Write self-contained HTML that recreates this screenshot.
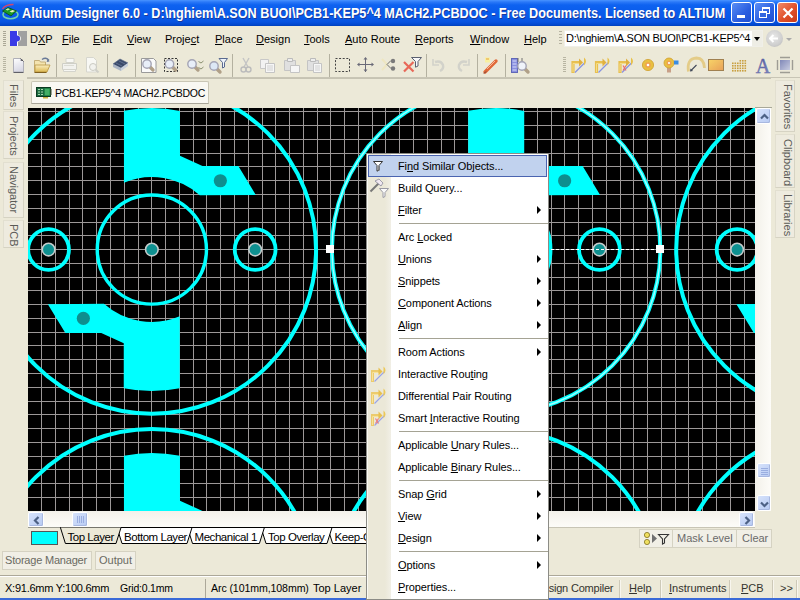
<!DOCTYPE html>
<html><head><meta charset="utf-8">
<style>
*{margin:0;padding:0;box-sizing:border-box}
html,body{width:800px;height:600px;overflow:hidden;background:#ece9d8;font-family:"Liberation Sans",sans-serif;font-size:11px;color:#000}
.a{position:absolute}
.t{position:absolute;white-space:nowrap;line-height:13px}
u{text-decoration:underline;text-underline-offset:1px;text-decoration-thickness:1px}
#title{left:0;top:0;width:800px;height:26px;background:linear-gradient(#4a94ff 0px,#2a78f8 2px,#0e62f0 5px,#0a5cec 12px,#0858e8 18px,#0652e0 22px,#0046cc 25px,#0040b8 26px)}
#title .tt{position:absolute;left:22px;top:5px;line-height:16px;color:#fff;font-weight:bold;font-size:14px;transform-origin:0 0;transform:scaleX(0.9035);text-shadow:1px 1px 0 #1a3a9a;white-space:nowrap}
.wb{position:absolute;top:2px;width:21px;height:21px;border:1px solid #fff;border-radius:3px;background:linear-gradient(135deg,#5a8ef5,#2a5ee0 60%,#1f4fd0)}
#menubar{left:0;top:26px;width:800px;height:26px;background:#ece9d8}
.mi{position:absolute;top:33px;white-space:nowrap;line-height:13px}
#toolbar{left:0;top:52px;width:800px;height:28px;background:#ece9d8}
.grip{position:absolute;width:3px;background:repeating-linear-gradient(#b5b2a0 0 1px,transparent 1px 3px)}
.sep{position:absolute;width:1px;background:#c5c2b2;border-right:1px solid #fff}
.vtab{position:absolute;border:1px solid #c9c6b5;background:#f3f1e8;border-radius:2px}
.vtab span{position:absolute;white-space:nowrap;transform-origin:0 0;transform:rotate(90deg);color:#555;font-size:11px;line-height:13px}
.menu{left:366px;top:153px;width:183px;height:447px;background:#fff;border:1px solid #8c8c86}
.gut{position:absolute;left:0;top:0;width:24px;height:100%;background:linear-gradient(90deg,#fafaf4 0,#fafaf4 1px,#ebe8d8 1px,#ebe8d8 18px,#f1efe6 24px)}
.msep{position:absolute;left:32px;width:149px;height:1px;background:#a5a394}
.arr{position:absolute;left:170px;width:0;height:0;border-top:4px solid transparent;border-bottom:4px solid transparent;border-left:4px solid #000}
.btn{position:absolute;border:1px solid #d5d2c2;background:#f1efe6}
</style></head><body>
<div id="title" class="a">
  <svg class="a" style="left:0;top:0" width="22" height="24" viewBox="0 0 22 24">
    <path d="M2.5 9 Q5 4.5 13.5 4.5" stroke="#d04870" stroke-width="1.5" fill="none"/>
    <ellipse cx="10.5" cy="14.5" rx="7.5" ry="4.2" fill="none" stroke="#70d0b0" stroke-width="1.6"/>
    <path d="M2.5 11 L8 7.5 L16.5 11 L11 16 Z" fill="#1c9a28" stroke="#0a4a10" stroke-width="0.8"/>
    <path d="M5.5 9.5l2.5-1.2 2 1-2.5 1.2z" fill="#c8f0b0"/>
    <path d="M9.5 11.5l3-1.4 2.5 1-3 1.5z" fill="#f0f0c0"/>
  </svg>
  <div class="tt">Altium Designer 6.0 - D:\nghiem\A.SON BUOI\PCB1-KEP5^4 MACH2.PCBDOC - Free Documents. Licensed to ALTIUM</div>
  <div class="wb" style="left:731px"><div class="a" style="left:5px;top:12px;width:8px;height:3px;background:#fff"></div></div>
  <div class="wb" style="left:754px"><div class="a" style="left:7px;top:4px;width:8px;height:7px;border:1px solid #fff;border-top-width:2px"></div><div class="a" style="left:4px;top:8px;width:8px;height:7px;border:1px solid #fff;border-top-width:2px;background:#3366e0"></div></div>
  <div class="wb" style="left:777px;width:21px;background:linear-gradient(135deg,#f08a6a,#e0502a 55%,#c83a18)"><svg class="a" style="left:4px;top:4px" width="12" height="12"><path d="M1.5 1.5L10.5 10.5M10.5 1.5L1.5 10.5" stroke="#fff" stroke-width="2.2"/></svg></div>
</div>

<div id="menubar" class="a">
  <svg class="a" style="left:0;top:0" width="30" height="26" viewBox="0 26 30 26">
    <path d="M3 31.5h3M3 33.5h3M3 35.5h3M3 37.5h3M3 39.5h3M3 41.5h3M3 43.5h3M3 45.5h3" stroke="#aaa796"/>
    <rect x="10" y="31" width="7" height="15" fill="#3a3ae6"/>
    <rect x="18" y="31" width="9" height="15" fill="#a0a0a0"/>
    <path d="M17.5 31V35.5A3 3 0 0 1 17.5 41.5V46" stroke="#fff" stroke-width="1" fill="none"/>
    <path d="M17 35.5A3 3 0 0 1 17 41.5Z" fill="#3a3ae6"/>
  </svg>
</div>
<div class="mi" style="left:30px">D<u>X</u>P</div>
<div class="mi" style="left:62px"><u>F</u>ile</div>
<div class="mi" style="left:93px"><u>E</u>dit</div>
<div class="mi" style="left:127px"><u>V</u>iew</div>
<div class="mi" style="left:165px">Proje<u>c</u>t</div>
<div class="mi" style="left:215px"><u>P</u>lace</div>
<div class="mi" style="left:256px"><u>D</u>esign</div>
<div class="mi" style="left:304px"><u>T</u>ools</div>
<div class="mi" style="left:345px"><u>A</u>uto Route</div>
<div class="mi" style="left:415px"><u>R</u>eports</div>
<div class="mi" style="left:470px"><u>W</u>indow</div>
<div class="mi" style="left:524px"><u>H</u>elp</div>
<div class="grip" style="left:559px;top:31px;height:15px"></div>
<div class="a" style="left:564px;top:30px;width:199px;height:17px;background:#fff;border:1px solid #f0efe8"></div>
<div class="t" style="left:566px;top:32px;letter-spacing:-0.25px">D:\nghiem\A.SON BUOI\PCB1-KEP5^4</div>
<div class="a" style="left:752px;top:31px;width:10px;height:15px;background:#eeede5"></div>
<div class="a" style="left:754px;top:37px;width:0;height:0;border-left:3px solid transparent;border-right:3px solid transparent;border-top:4px solid #000"></div>
<div class="a" style="left:766px;top:30px;width:17px;height:17px;border-radius:50%;background:radial-gradient(circle at 45% 40%,#e8e8e8,#cfcfcf 60%,#b0b0b0)"></div><svg class="a" style="left:769px;top:34px" width="11" height="9"><path d="M1 4.5h8M4.5 1l-3.5 3.5 3.5 3.5" stroke="#fff" stroke-width="2" fill="none"/></svg>
<div class="a" style="left:786px;top:38px;width:0;height:0;border-left:3px solid transparent;border-right:3px solid transparent;border-top:3px solid #aaa"></div>

<div id="toolbar" class="a">
  <div class="a" style="left:27px;top:25px;width:773px;height:1px;background:#c8c5b5"></div>
</div>
<svg class="a" style="left:0;top:52px" width="800" height="28" viewBox="0 52 800 28">
<path d="M3 57.5h3M3 59.5h3M3 61.5h3M3 63.5h3M3 65.5h3M3 67.5h3M3 69.5h3M3 71.5h3" stroke="#b8b5a2" stroke-width="1"/>
<path d="M563 57.5h3M563 59.5h3M563 61.5h3M563 63.5h3M563 65.5h3M563 67.5h3M563 69.5h3M563 71.5h3" stroke="#b8b5a2" stroke-width="1"/>
<path d="M56.5 54V77" stroke="#b4b1a0"/>
<path d="M107.5 54V77" stroke="#b4b1a0"/>
<path d="M135.5 54V77" stroke="#b4b1a0"/>
<path d="M232.5 54V77" stroke="#b4b1a0"/>
<path d="M329.5 54V77" stroke="#b4b1a0"/>
<path d="M426.5 54V77" stroke="#b4b1a0"/>
<path d="M477.5 54V77" stroke="#b4b1a0"/>
<path d="M505.5 54V77" stroke="#b4b1a0"/>
<defs><linearGradient id="pg" x1="0" y1="0" x2="0.3" y2="1"><stop offset="0" stop-color="#fff"/><stop offset="1" stop-color="#d8d8e4"/></linearGradient><linearGradient id="fg" x1="0" y1="0" x2="0" y2="1"><stop offset="0" stop-color="#fbeec0"/><stop offset="1" stop-color="#dcb850"/></linearGradient></defs><path d="M13.5 58.5h7l3 3v10.5h-10z" fill="url(#pg)" stroke="#b0b0b8"/><path d="M13.5 72.5h10" stroke="#606068"/><path d="M20.5 58.5l3 3" stroke="#505058"/><circle cx="21.5" cy="60" r="1" fill="#606068"/>
<path d="M34.5 60.5h5l1 1.5h5v10h-11z" fill="#f4e4b0" stroke="#c0a870" stroke-width="0.9"/><path d="M35 65h15l-3 7h-12z" fill="url(#fg)" stroke="#b89440" stroke-width="0.8"/><path d="M34.5 72.5h12" stroke="#806020"/><path d="M42 59.5q4-3 7 1" stroke="#6a7a98" stroke-width="1.3" fill="none"/><path d="M47.5 59l2 2.5-2.8 0.6z" fill="#6a7a98"/>
<path d="M66 58.5h8v4h-8z" fill="#f8f8f4" stroke="#d4d4cc"/><path d="M62.5 63.5h14v6h-14z" fill="#f2f2ee" stroke="#cfcfc6"/><path d="M63.5 69.5h12v2h-12z" fill="#f6f6f2" stroke="#d4d4cc"/><path d="M64 65.5h10" stroke="#dcdcd4"/>
<path d="M86.5 57.5h7l3 3v11.5h-10z" fill="#f8f8f4" stroke="#d6d6ce"/><circle cx="93" cy="67" r="3.5" fill="#f2f2ee" stroke="#cacac2"/><path d="M95.5 69.5l3 3" stroke="#cfcfc8" stroke-width="2"/>
<path d="M113 64l7-5 8 4-7 5z" fill="#3a4a6a" stroke="#5a6a8a" stroke-width="0.6"/><path d="M113 64v3l8 4v-3z" fill="#aab4c4"/><path d="M121 68v3l7-5v-3z" fill="#c8d0dc"/><path d="M116 63l6 3M119 61l6 3" stroke="#7a8aaa" stroke-width="0.6"/>
<path d="M141.5 58.5h12l2.5 2.5v11.5h-14.5z" fill="#fafafa" stroke="#9a9a9a"/><path d="M150.0 67.0L153.0 70.0" stroke="#b0a088" stroke-width="3.4" stroke-linecap="round"/><circle cx="147" cy="64" r="4.2" fill="#e8eef8" stroke="#a4a4b4" stroke-width="1.4"/>
<rect x="164.5" y="58.5" width="13" height="13" fill="none" stroke="#333" stroke-dasharray="2 1.5"/><path d="M172.5 67.0L175.5 70.0" stroke="#b0a088" stroke-width="3.4" stroke-linecap="round"/><circle cx="169.5" cy="64" r="4.2" fill="#e8eef8" stroke="#a4a4b4" stroke-width="1.4"/>
<path d="M195.0 67.0L198.0 70.0" stroke="#b0a088" stroke-width="3.4" stroke-linecap="round"/><circle cx="192" cy="64" r="4.2" fill="#e8eef8" stroke="#a4a4b4" stroke-width="1.4"/><path d="M198.5 61.5l2.5 1.5 2.5-2M198.5 67.5l2.5 1.5 2.5-2" stroke="#8a9070" stroke-width="1" fill="none"/>
<path d="M217.0 69.0L220.0 72.0" stroke="#b0a088" stroke-width="3.4" stroke-linecap="round"/><circle cx="214" cy="66" r="4.2" fill="#dde8f5" stroke="#a4a4b4" stroke-width="1.4"/><path d="M219 58.5h8.5l-3 4v4.5l-2 1v-5.5z" fill="#eef3fa" stroke="#5a6a90" stroke-width="1"/>
<path d="M243 58l5 9M249 58l-5 9" stroke="#c4c4c4" stroke-width="1.4"/><circle cx="243.5" cy="69.5" r="2.5" fill="none" stroke="#bcbcbc" stroke-width="1.4"/><circle cx="248.5" cy="69.5" r="2.5" fill="none" stroke="#bcbcbc" stroke-width="1.4"/>
<path d="M260.5 59.5h8v9h-8z" fill="#f2f2f2" stroke="#c8c8c8"/><path d="M265.5 63.5h9v9h-9z" fill="#f6f6f6" stroke="#c4c4c4"/><path d="M267 66h6M267 68h6M267 70h6" stroke="#d0d0d0"/>
<path d="M284.5 60.5h11v10h-11z" fill="#e0e0e0" stroke="#c4c4c4"/><path d="M287.5 58.5h5v3h-5z" fill="#eee" stroke="#bbb"/><path d="M290.5 65.5h9v7h-9z" fill="#f6f6f6" stroke="#c4c4c4"/>
<path d="M307.5 60.5h11v10h-11z" fill="#e0e0e0" stroke="#c4c4c4"/><path d="M310.5 58.5h5v3h-5z" fill="#eee" stroke="#bbb"/><path d="M313.5 63.5h8v9h-8z" fill="#f6f6f6" stroke="#c4c4c4"/><path d="M315 66h5M315 68h5M315 70h5" stroke="#d0d0d0"/>
<rect x="335.5" y="58.5" width="14" height="13" fill="none" stroke="#444" stroke-dasharray="2 1.6"/>
<path d="M365.5 58v14M358.5 64.5h14" stroke="#6a6a78" stroke-width="1"/><path d="M363.5 59.5h4l-2-2.5zM363.5 69.5h4l-2 2.5zM359.5 62.5v4l-2.5-2zM371.5 62.5v4l2.5-2z" fill="#6a6a78"/>
<path d="M382 59l5 5.5-5 5.5" stroke="#eee6c0" stroke-width="2" fill="none"/><path d="M387 64.5l4-4M387 64.5l4 4" stroke="#707070" stroke-width="1"/><circle cx="393" cy="61" r="2.2" fill="#7a7a7a"/><circle cx="393" cy="68.5" r="2.2" fill="#7a7a7a"/>
<path d="M404 62l9.5 9.5M413.5 62l-9.5 9.5" stroke="#e86858" stroke-width="2.2"/><path d="M411.5 57.5h10l-3.5 4v4.5l-2.5 1.2v-5.7z" fill="#f8f8fa" stroke="#5a6070" stroke-width="1"/>
<path d="M435 62q6-2 8 3q1 4-3 6" stroke="#d2d2ca" stroke-width="2.4" fill="none"/><path d="M433 59v6h6" stroke="#d2d2ca" stroke-width="1.6" fill="none"/>
<path d="M467 62q-6-2-8 3q-1 4 3 6" stroke="#d2d2ca" stroke-width="2.4" fill="none"/><path d="M469 59v6h-6" stroke="#d2d2ca" stroke-width="1.6" fill="none"/>
<rect x="485" y="57.5" width="5" height="5" fill="#f8f0a0"/><path d="M486 59h3" stroke="#e8a040"/><path d="M485 72l11-11" stroke="#e06838" stroke-width="3.4" stroke-linecap="round"/><path d="M487 69l8-8" stroke="#f8b898" stroke-width="1"/><path d="M484 73.5l2-2" stroke="#604040" stroke-width="1"/>
<rect x="511.5" y="58.5" width="6" height="14" fill="#8a90e0" stroke="#6068b8"/><path d="M512.5 61h4M512.5 64h4M512.5 67h4M512.5 70h4" stroke="#d8dcf8"/><path d="M518 58v4M522 58v4" stroke="#707070"/><path d="M525.0 69.0L528.0 72.0" stroke="#b0a088" stroke-width="3.4" stroke-linecap="round"/><circle cx="522" cy="66" r="4.2" fill="#f0f4fa" stroke="#a4a4b4" stroke-width="1.4"/>
<path d="M573 73V62.5h7" stroke="#e8c050" stroke-width="3.2" fill="none"/><path d="M573 72V63.5h6" stroke="#f4dc88" stroke-width="1" fill="none"/><path d="M579 58.5l4 4-4 4z" fill="#e0b040"/><path d="M575 72.5l10-10" stroke="#8894e0" stroke-width="1.2"/><path d="M584 57.5q4 3.5 0 8z" fill="#e8c048"/>
<path d="M596.5 73V62.5h7" stroke="#e8c050" stroke-width="3.2" fill="none"/><path d="M596.5 72V63.5h6" stroke="#f4dc88" stroke-width="1" fill="none"/><path d="M602.5 58.5l4 4-4 4z" fill="#e0b040"/><path d="M598.5 72.5l10-10" stroke="#8894e0" stroke-width="1.2"/><path d="M607.5 57.5q4 3.5 0 8z" fill="#e8c048"/>
<path d="M620 73V62.5h7" stroke="#e8c050" stroke-width="3.2" fill="none"/><path d="M620 72V63.5h6" stroke="#f4dc88" stroke-width="1" fill="none"/><path d="M626 58.5l4 4-4 4z" fill="#e0b040"/><path d="M622 72.5l10-10" stroke="#8894e0" stroke-width="1.2"/><path d="M631 57.5q4 3.5 0 8z" fill="#e8c048"/><path d="M623 65.5l3 5M626 65.5l-3 5" stroke="#e87070" stroke-width="1.2"/>
<circle cx="648" cy="65" r="5.6" fill="#e8c040" stroke="#d0a030" stroke-width="0.8"/><circle cx="648" cy="65" r="2.8" fill="#f0a050"/><circle cx="648" cy="65" r="1.3" fill="#fff"/>
<path d="M667 67h4v5.5h-4z" fill="#c8a088"/><circle cx="669" cy="63" r="5" fill="#e8c040" stroke="#d0a030" stroke-width="0.8"/><circle cx="669" cy="63" r="2.5" fill="#f0a050"/><circle cx="669" cy="63" r="1.1" fill="#fff"/><rect x="674" y="60.5" width="4.5" height="4" fill="#3a8ce0"/>
<path d="M688.5 71.5q-2-13 8-13.5q7.5 0 8 10" stroke="#e4cc88" stroke-width="2.8" fill="none"/><path d="M691 70.5l5.5-5.5" stroke="#404858" stroke-width="1.1"/><path d="M690 71.5l0.5-3 2.5 2.5z" fill="#404858"/>
<defs><linearGradient id="rg" x1="0" y1="0" x2="1" y2="1"><stop offset="0" stop-color="#f8d468"/><stop offset="1" stop-color="#e8a058"/></linearGradient></defs><rect x="708.5" y="59.5" width="15" height="11" fill="url(#rg)" stroke="#a08050"/>
<rect x="739.5" y="60" width="1.6" height="1.6" fill="#c8a040"/><rect x="742" y="60" width="1.6" height="1.6" fill="#c8a040"/><rect x="744.5" y="60" width="1.6" height="1.6" fill="#c8a040"/><rect x="732" y="62.5" width="1.6" height="1.6" fill="#c8a040"/><rect x="734.5" y="62.5" width="1.6" height="1.6" fill="#c8a040"/><rect x="737" y="62.5" width="1.6" height="1.6" fill="#c8a040"/><rect x="739.5" y="62.5" width="1.6" height="1.6" fill="#c8a040"/><rect x="742" y="62.5" width="1.6" height="1.6" fill="#c8a040"/><rect x="744.5" y="62.5" width="1.6" height="1.6" fill="#c8a040"/><rect x="732" y="65" width="1.6" height="1.6" fill="#c8a040"/><rect x="734.5" y="65" width="1.6" height="1.6" fill="#c8a040"/><rect x="737" y="65" width="1.6" height="1.6" fill="#c8a040"/><rect x="739.5" y="65" width="1.6" height="1.6" fill="#c8a040"/><rect x="742" y="65" width="1.6" height="1.6" fill="#c8a040"/><rect x="744.5" y="65" width="1.6" height="1.6" fill="#c8a040"/><rect x="732" y="67.5" width="1.6" height="1.6" fill="#c8a040"/><rect x="734.5" y="67.5" width="1.6" height="1.6" fill="#c8a040"/><rect x="737" y="67.5" width="1.6" height="1.6" fill="#c8a040"/><rect x="739.5" y="67.5" width="1.6" height="1.6" fill="#c8a040"/><rect x="742" y="67.5" width="1.6" height="1.6" fill="#c8a040"/><rect x="744.5" y="67.5" width="1.6" height="1.6" fill="#c8a040"/><rect x="732" y="70" width="1.6" height="1.6" fill="#c8a040"/><rect x="734.5" y="70" width="1.6" height="1.6" fill="#c8a040"/><rect x="737" y="70" width="1.6" height="1.6" fill="#c8a040"/><rect x="739.5" y="70" width="1.6" height="1.6" fill="#c8a040"/><rect x="742" y="70" width="1.6" height="1.6" fill="#c8a040"/><rect x="744.5" y="70" width="1.6" height="1.6" fill="#c8a040"/>
<defs><linearGradient id="ag" x1="0" y1="0" x2="0" y2="1"><stop offset="0" stop-color="#5058a0"/><stop offset="1" stop-color="#8890c8"/></linearGradient></defs><text x="763" y="73" font-family="Liberation Serif" font-size="20" fill="url(#ag)" stroke="#5a62a0" stroke-width="0.4" text-anchor="middle">A</text>
<defs><linearGradient id="cg" x1="0" y1="0" x2="1" y2="1"><stop offset="0" stop-color="#8088b8"/><stop offset="1" stop-color="#c8cce0"/></linearGradient></defs><rect x="780" y="60" width="10" height="10" fill="url(#cg)"/><path d="M780.5 57.5h10M780.5 72.5h10M777.5 60.5v10M792.5 60.5v10" stroke="#505050" stroke-width="1.4" stroke-dasharray="1 1"/>
<path d="M27 78.5H771" stroke="#c6c3b3"/>
</svg>

<!-- tabs -->
<div class="a" style="left:3px;top:80px;width:21px;height:30px;border:1px solid #e2dfd0;border-right-color:#d6d3c3;border-bottom-color:#d6d3c3;background:#eeebdf"></div>
<div class="t" style="left:20px;top:84px;transform-origin:0 0;transform:rotate(90deg);color:#5a5a56">Files</div>
<div class="a" style="left:3px;top:111px;width:21px;height:48px;border:1px solid #e2dfd0;border-right-color:#d6d3c3;border-bottom-color:#d6d3c3;background:#eeebdf"></div>
<div class="t" style="left:20px;top:116px;transform-origin:0 0;transform:rotate(90deg);color:#5a5a56">Projects</div>
<div class="a" style="left:3px;top:162px;width:21px;height:56px;border:1px solid #e2dfd0;border-right-color:#d6d3c3;border-bottom-color:#d6d3c3;background:#eeebdf"></div>
<div class="t" style="left:20px;top:166px;transform-origin:0 0;transform:rotate(90deg);color:#5a5a56">Navigator</div>
<div class="a" style="left:3px;top:220px;width:21px;height:28px;border:1px solid #e2dfd0;border-right-color:#d6d3c3;border-bottom-color:#d6d3c3;background:#eeebdf"></div>
<div class="t" style="left:20px;top:224px;transform-origin:0 0;transform:rotate(90deg);color:#5a5a56">PCB</div>
<div class="a" style="left:775px;top:80px;width:20px;height:52px;border:1px solid #e2dfd0;border-right-color:#d6d3c3;border-bottom-color:#d6d3c3;background:#eeebdf"></div>
<div class="t" style="left:793.5px;top:83.5px;transform-origin:0 0;transform:rotate(90deg);color:#5a5a56">Favorites</div>
<div class="a" style="left:775px;top:134px;width:20px;height:54px;border:1px solid #e2dfd0;border-right-color:#d6d3c3;border-bottom-color:#d6d3c3;background:#eeebdf"></div>
<div class="t" style="left:793.5px;top:139px;transform-origin:0 0;transform:rotate(90deg);color:#5a5a56">Clipboard</div>
<div class="a" style="left:775px;top:190px;width:20px;height:48px;border:1px solid #e2dfd0;border-right-color:#d6d3c3;border-bottom-color:#d6d3c3;background:#eeebdf"></div>
<div class="t" style="left:793.5px;top:194px;transform-origin:0 0;transform:rotate(90deg);color:#5a5a56">Libraries</div>
<!-- doc tab -->
<div class="a" style="left:31px;top:81px;width:178px;height:23px;background:#f9f8f2;border:1px solid #c9c6b5;border-bottom-color:#a8a598;border-radius:2px 2px 0 0"></div>
<svg class="a" style="left:36px;top:87px" width="16" height="13" viewBox="0 0 16 13"><rect x="0.5" y="0.5" width="14" height="9" fill="#1a6a40" stroke="#0a3a20"/><path d="M2 2.5h2M2 5h2M2 7.5h2M5 2.5h2M5 5h2M5 7.5h2" stroke="#a8d8b0" stroke-width="1.2"/><rect x="8.5" y="1.5" width="5.5" height="7" fill="#2aa050"/><path d="M9 3h4M9 5h4M9 7h4" stroke="#70c890" stroke-width="0.7"/><rect x="7" y="10" width="5" height="1.5" fill="#c8b040"/><rect x="14" y="2" width="1.5" height="6" fill="#304830"/></svg>
<div class="t" style="left:55px;top:87px;font-size:10.5px;letter-spacing:-0.25px">PCB1-KEP5^4 MACH2.PCBDOC</div>

<svg width="727" height="403" viewBox="28 108 727 403" style="position:absolute;left:28px;top:108px;display:block" shape-rendering="crispEdges">
<rect x="28" y="108" width="727" height="403" fill="#000"/>
<path d="M41.5 108V511M55.5 108V511M69.5 108V511M82.5 108V511M96.5 108V511M110.5 108V511M124.5 108V511M138.5 108V511M151.5 108V511M165.5 108V511M179.5 108V511M193.5 108V511M206.5 108V511M220.5 108V511M234.5 108V511M248.5 108V511M262.5 108V511M275.5 108V511M289.5 108V511M303.5 108V511M317.5 108V511M330.5 108V511M344.5 108V511M358.5 108V511M372.5 108V511M385.5 108V511M399.5 108V511M413.5 108V511M427.5 108V511M441.5 108V511M454.5 108V511M468.5 108V511M482.5 108V511M496.5 108V511M509.5 108V511M523.5 108V511M537.5 108V511M551.5 108V511M564.5 108V511M578.5 108V511M592.5 108V511M606.5 108V511M620.5 108V511M633.5 108V511M647.5 108V511M661.5 108V511M675.5 108V511M688.5 108V511M702.5 108V511M716.5 108V511M730.5 108V511M744.5 108V511M28 111.5H755M28 125.5H755M28 139.5H755M28 153.5H755M28 166.5H755M28 180.5H755M28 194.5H755M28 208.5H755M28 222.5H755M28 235.5H755M28 249.5H755M28 263.5H755M28 277.5H755M28 290.5H755M28 304.5H755M28 318.5H755M28 332.5H755M28 345.5H755M28 359.5H755M28 373.5H755M28 387.5H755M28 401.5H755M28 414.5H755M28 428.5H755M28 442.5H755M28 456.5H755M28 469.5H755M28 483.5H755M28 497.5H755" stroke="#9c9898" stroke-width="1" fill="none"/>
</svg>
<svg width="727" height="403" viewBox="28 108 727 403" style="position:absolute;left:28px;top:108px;display:block">
<circle cx="-192.43" cy="-94.72" r="164.2" fill="none" stroke="#00ffff" stroke-width="4"/>
<circle cx="-192.43" cy="-94.72" r="54.6" fill="none" stroke="#00ffff" stroke-width="3.4"/>
<circle cx="-295.73" cy="-94.72" r="20.4" fill="none" stroke="#00ffff" stroke-width="3.8"/>
<circle cx="-89.13" cy="-94.72" r="20.4" fill="none" stroke="#00ffff" stroke-width="3.8"/>
<path d="M-220.33 -233.44A141.5 141.5 0 0 1 -164.33 -233.40L-164.33 -188.42L-141.83 -178.22L-105.93 -178.22L-88.43 -149.32L-144.53 -149.02A72.4 72.4 0 0 0 -220.33 -161.52Z" fill="#00ffff"/>
<path d="M-164.53 44.01A141.5 141.5 0 0 1 -220.53 43.97L-220.53 -1.02L-243.03 -11.22L-278.93 -11.22L-296.43 -40.12L-240.33 -40.42A72.4 72.4 0 0 0 -164.53 -27.91Z" fill="#00ffff"/>
<circle cx="-123.93" cy="-163.52" r="6.6" fill="#0e8e8e"/>
<circle cx="-260.93" cy="-25.92" r="6.6" fill="#0e8e8e"/>
<circle cx="-295.73" cy="-94.72" r="6.3" fill="#0e9090" stroke="#c4cccc" stroke-width="1.6"/>
<circle cx="-192.43" cy="-94.72" r="6.3" fill="#0e9090" stroke="#c4cccc" stroke-width="1.6"/>
<circle cx="-89.13" cy="-94.72" r="6.3" fill="#0e9090" stroke="#c4cccc" stroke-width="1.6"/>
<circle cx="-192.43" cy="249.56" r="164.2" fill="none" stroke="#00ffff" stroke-width="4"/>
<circle cx="-192.43" cy="249.56" r="54.6" fill="none" stroke="#00ffff" stroke-width="3.4"/>
<circle cx="-295.73" cy="249.56" r="20.4" fill="none" stroke="#00ffff" stroke-width="3.8"/>
<circle cx="-89.13" cy="249.56" r="20.4" fill="none" stroke="#00ffff" stroke-width="3.8"/>
<path d="M-220.33 110.84A141.5 141.5 0 0 1 -164.33 110.88L-164.33 155.86L-141.83 166.06L-105.93 166.06L-88.43 194.96L-144.53 195.26A72.4 72.4 0 0 0 -220.33 182.75Z" fill="#00ffff"/>
<path d="M-164.53 388.28A141.5 141.5 0 0 1 -220.53 388.24L-220.53 343.26L-243.03 333.06L-278.93 333.06L-296.43 304.16L-240.33 303.86A72.4 72.4 0 0 0 -164.53 316.37Z" fill="#00ffff"/>
<circle cx="-123.93" cy="180.76" r="6.6" fill="#0e8e8e"/>
<circle cx="-260.93" cy="318.36" r="6.6" fill="#0e8e8e"/>
<circle cx="-295.73" cy="249.56" r="6.3" fill="#0e9090" stroke="#c4cccc" stroke-width="1.6"/>
<circle cx="-192.43" cy="249.56" r="6.3" fill="#0e9090" stroke="#c4cccc" stroke-width="1.6"/>
<circle cx="-89.13" cy="249.56" r="6.3" fill="#0e9090" stroke="#c4cccc" stroke-width="1.6"/>
<circle cx="-192.43" cy="593.24" r="164.2" fill="none" stroke="#00ffff" stroke-width="4"/>
<circle cx="-192.43" cy="593.84" r="54.6" fill="none" stroke="#00ffff" stroke-width="3.4"/>
<circle cx="-295.73" cy="593.84" r="20.4" fill="none" stroke="#00ffff" stroke-width="3.8"/>
<circle cx="-89.13" cy="593.84" r="20.4" fill="none" stroke="#00ffff" stroke-width="3.8"/>
<path d="M-220.33 455.71A141.5 141.5 0 0 1 -164.33 455.75L-164.33 500.74L-141.83 510.94L-105.93 510.94L-88.43 539.84L-144.53 540.14A72.4 72.4 0 0 0 -220.33 527.63Z" fill="#00ffff"/>
<path d="M-164.53 732.56A141.5 141.5 0 0 1 -220.53 732.52L-220.53 687.54L-243.03 677.34L-278.93 677.34L-296.43 648.44L-240.33 648.13A72.4 72.4 0 0 0 -164.53 660.64Z" fill="#00ffff"/>
<circle cx="-123.93" cy="525.04" r="6.6" fill="#0e8e8e"/>
<circle cx="-260.93" cy="662.63" r="6.6" fill="#0e8e8e"/>
<circle cx="-295.73" cy="593.84" r="6.3" fill="#0e9090" stroke="#c4cccc" stroke-width="1.6"/>
<circle cx="-192.43" cy="593.84" r="6.3" fill="#0e9090" stroke="#c4cccc" stroke-width="1.6"/>
<circle cx="-89.13" cy="593.84" r="6.3" fill="#0e9090" stroke="#c4cccc" stroke-width="1.6"/>
<circle cx="151.85" cy="-94.72" r="164.2" fill="none" stroke="#00ffff" stroke-width="4"/>
<circle cx="151.85" cy="-94.72" r="54.6" fill="none" stroke="#00ffff" stroke-width="3.4"/>
<circle cx="48.55" cy="-94.72" r="20.4" fill="none" stroke="#00ffff" stroke-width="3.8"/>
<circle cx="255.15" cy="-94.72" r="20.4" fill="none" stroke="#00ffff" stroke-width="3.8"/>
<path d="M123.95 -233.44A141.5 141.5 0 0 1 179.95 -233.40L179.95 -188.42L202.45 -178.22L238.35 -178.22L255.85 -149.32L199.75 -149.02A72.4 72.4 0 0 0 123.95 -161.52Z" fill="#00ffff"/>
<path d="M179.75 44.01A141.5 141.5 0 0 1 123.75 43.97L123.75 -1.02L101.25 -11.22L65.35 -11.22L47.85 -40.12L103.95 -40.42A72.4 72.4 0 0 0 179.75 -27.91Z" fill="#00ffff"/>
<circle cx="220.35" cy="-163.52" r="6.6" fill="#0e8e8e"/>
<circle cx="83.35" cy="-25.92" r="6.6" fill="#0e8e8e"/>
<circle cx="48.55" cy="-94.72" r="6.3" fill="#0e9090" stroke="#c4cccc" stroke-width="1.6"/>
<circle cx="151.85" cy="-94.72" r="6.3" fill="#0e9090" stroke="#c4cccc" stroke-width="1.6"/>
<circle cx="255.15" cy="-94.72" r="6.3" fill="#0e9090" stroke="#c4cccc" stroke-width="1.6"/>
<circle cx="151.85" cy="249.56" r="164.2" fill="none" stroke="#00ffff" stroke-width="4"/>
<circle cx="151.85" cy="249.56" r="54.6" fill="none" stroke="#00ffff" stroke-width="3.4"/>
<circle cx="48.55" cy="249.56" r="20.4" fill="none" stroke="#00ffff" stroke-width="3.8"/>
<circle cx="255.15" cy="249.56" r="20.4" fill="none" stroke="#00ffff" stroke-width="3.8"/>
<path d="M123.95 110.84A141.5 141.5 0 0 1 179.95 110.88L179.95 155.86L202.45 166.06L238.35 166.06L255.85 194.96L199.75 195.26A72.4 72.4 0 0 0 123.95 182.75Z" fill="#00ffff"/>
<path d="M179.75 388.28A141.5 141.5 0 0 1 123.75 388.24L123.75 343.26L101.25 333.06L65.35 333.06L47.85 304.16L103.95 303.86A72.4 72.4 0 0 0 179.75 316.37Z" fill="#00ffff"/>
<circle cx="220.35" cy="180.76" r="6.6" fill="#0e8e8e"/>
<circle cx="83.35" cy="318.36" r="6.6" fill="#0e8e8e"/>
<circle cx="48.55" cy="249.56" r="6.3" fill="#0e9090" stroke="#c4cccc" stroke-width="1.6"/>
<circle cx="151.85" cy="249.56" r="6.3" fill="#0e9090" stroke="#c4cccc" stroke-width="1.6"/>
<circle cx="255.15" cy="249.56" r="6.3" fill="#0e9090" stroke="#c4cccc" stroke-width="1.6"/>
<circle cx="151.85" cy="593.24" r="164.2" fill="none" stroke="#00ffff" stroke-width="4"/>
<circle cx="151.85" cy="593.84" r="54.6" fill="none" stroke="#00ffff" stroke-width="3.4"/>
<circle cx="48.55" cy="593.84" r="20.4" fill="none" stroke="#00ffff" stroke-width="3.8"/>
<circle cx="255.15" cy="593.84" r="20.4" fill="none" stroke="#00ffff" stroke-width="3.8"/>
<path d="M123.95 455.71A141.5 141.5 0 0 1 179.95 455.75L179.95 500.74L202.45 510.94L238.35 510.94L255.85 539.84L199.75 540.14A72.4 72.4 0 0 0 123.95 527.63Z" fill="#00ffff"/>
<path d="M179.75 732.56A141.5 141.5 0 0 1 123.75 732.52L123.75 687.54L101.25 677.34L65.35 677.34L47.85 648.44L103.95 648.13A72.4 72.4 0 0 0 179.75 660.64Z" fill="#00ffff"/>
<circle cx="220.35" cy="525.04" r="6.6" fill="#0e8e8e"/>
<circle cx="83.35" cy="662.63" r="6.6" fill="#0e8e8e"/>
<circle cx="48.55" cy="593.84" r="6.3" fill="#0e9090" stroke="#c4cccc" stroke-width="1.6"/>
<circle cx="151.85" cy="593.84" r="6.3" fill="#0e9090" stroke="#c4cccc" stroke-width="1.6"/>
<circle cx="255.15" cy="593.84" r="6.3" fill="#0e9090" stroke="#c4cccc" stroke-width="1.6"/>
<circle cx="496.12" cy="-94.72" r="164.2" fill="none" stroke="#00ffff" stroke-width="4"/>
<circle cx="496.12" cy="-94.72" r="54.6" fill="none" stroke="#00ffff" stroke-width="3.4"/>
<circle cx="392.82" cy="-94.72" r="20.4" fill="none" stroke="#00ffff" stroke-width="3.8"/>
<circle cx="599.42" cy="-94.72" r="20.4" fill="none" stroke="#00ffff" stroke-width="3.8"/>
<path d="M468.22 -233.44A141.5 141.5 0 0 1 524.22 -233.40L524.22 -188.42L546.72 -178.22L582.62 -178.22L600.12 -149.32L544.02 -149.02A72.4 72.4 0 0 0 468.22 -161.52Z" fill="#00ffff"/>
<path d="M524.02 44.01A141.5 141.5 0 0 1 468.02 43.97L468.02 -1.02L445.52 -11.22L409.62 -11.22L392.12 -40.12L448.22 -40.42A72.4 72.4 0 0 0 524.02 -27.91Z" fill="#00ffff"/>
<circle cx="564.62" cy="-163.52" r="6.6" fill="#0e8e8e"/>
<circle cx="427.62" cy="-25.92" r="6.6" fill="#0e8e8e"/>
<circle cx="392.82" cy="-94.72" r="6.3" fill="#0e9090" stroke="#c4cccc" stroke-width="1.6"/>
<circle cx="496.12" cy="-94.72" r="6.3" fill="#0e9090" stroke="#c4cccc" stroke-width="1.6"/>
<circle cx="599.42" cy="-94.72" r="6.3" fill="#0e9090" stroke="#c4cccc" stroke-width="1.6"/>
<circle cx="496.12" cy="249.56" r="164.2" fill="none" stroke="#00ffff" stroke-width="4"/>
<circle cx="496.12" cy="249.56" r="164.2" fill="none" stroke="#a0ffff" stroke-width="1.4"/>
<circle cx="496.12" cy="249.56" r="54.6" fill="none" stroke="#00ffff" stroke-width="3.4"/>
<circle cx="392.82" cy="249.56" r="20.4" fill="none" stroke="#00ffff" stroke-width="3.8"/>
<circle cx="599.42" cy="249.56" r="20.4" fill="none" stroke="#00ffff" stroke-width="3.8"/>
<path d="M468.22 110.84A141.5 141.5 0 0 1 524.22 110.88L524.22 155.86L546.72 166.06L582.62 166.06L600.12 194.96L544.02 195.26A72.4 72.4 0 0 0 468.22 182.75Z" fill="#00ffff"/>
<path d="M524.02 388.28A141.5 141.5 0 0 1 468.02 388.24L468.02 343.26L445.52 333.06L409.62 333.06L392.12 304.16L448.22 303.86A72.4 72.4 0 0 0 524.02 316.37Z" fill="#00ffff"/>
<circle cx="564.62" cy="180.76" r="6.6" fill="#0e8e8e"/>
<circle cx="427.62" cy="318.36" r="6.6" fill="#0e8e8e"/>
<circle cx="392.82" cy="249.56" r="6.3" fill="#0e9090" stroke="#c4cccc" stroke-width="1.6"/>
<circle cx="496.12" cy="249.56" r="6.3" fill="#0e9090" stroke="#c4cccc" stroke-width="1.6"/>
<circle cx="599.42" cy="249.56" r="6.3" fill="#0e9090" stroke="#c4cccc" stroke-width="1.6"/>
<circle cx="496.12" cy="593.24" r="164.2" fill="none" stroke="#00ffff" stroke-width="4"/>
<circle cx="496.12" cy="593.84" r="54.6" fill="none" stroke="#00ffff" stroke-width="3.4"/>
<circle cx="392.82" cy="593.84" r="20.4" fill="none" stroke="#00ffff" stroke-width="3.8"/>
<circle cx="599.42" cy="593.84" r="20.4" fill="none" stroke="#00ffff" stroke-width="3.8"/>
<path d="M468.22 455.71A141.5 141.5 0 0 1 524.22 455.75L524.22 500.74L546.72 510.94L582.62 510.94L600.12 539.84L544.02 540.14A72.4 72.4 0 0 0 468.22 527.63Z" fill="#00ffff"/>
<path d="M524.02 732.56A141.5 141.5 0 0 1 468.02 732.52L468.02 687.54L445.52 677.34L409.62 677.34L392.12 648.44L448.22 648.13A72.4 72.4 0 0 0 524.02 660.64Z" fill="#00ffff"/>
<circle cx="564.62" cy="525.04" r="6.6" fill="#0e8e8e"/>
<circle cx="427.62" cy="662.63" r="6.6" fill="#0e8e8e"/>
<circle cx="392.82" cy="593.84" r="6.3" fill="#0e9090" stroke="#c4cccc" stroke-width="1.6"/>
<circle cx="496.12" cy="593.84" r="6.3" fill="#0e9090" stroke="#c4cccc" stroke-width="1.6"/>
<circle cx="599.42" cy="593.84" r="6.3" fill="#0e9090" stroke="#c4cccc" stroke-width="1.6"/>
<circle cx="840.40" cy="-94.72" r="164.2" fill="none" stroke="#00ffff" stroke-width="4"/>
<circle cx="840.40" cy="-94.72" r="54.6" fill="none" stroke="#00ffff" stroke-width="3.4"/>
<circle cx="737.10" cy="-94.72" r="20.4" fill="none" stroke="#00ffff" stroke-width="3.8"/>
<circle cx="943.70" cy="-94.72" r="20.4" fill="none" stroke="#00ffff" stroke-width="3.8"/>
<path d="M812.50 -233.44A141.5 141.5 0 0 1 868.50 -233.40L868.50 -188.42L891.00 -178.22L926.90 -178.22L944.40 -149.32L888.30 -149.02A72.4 72.4 0 0 0 812.50 -161.52Z" fill="#00ffff"/>
<path d="M868.30 44.01A141.5 141.5 0 0 1 812.30 43.97L812.30 -1.02L789.80 -11.22L753.90 -11.22L736.40 -40.12L792.50 -40.42A72.4 72.4 0 0 0 868.30 -27.91Z" fill="#00ffff"/>
<circle cx="908.90" cy="-163.52" r="6.6" fill="#0e8e8e"/>
<circle cx="771.90" cy="-25.92" r="6.6" fill="#0e8e8e"/>
<circle cx="737.10" cy="-94.72" r="6.3" fill="#0e9090" stroke="#c4cccc" stroke-width="1.6"/>
<circle cx="840.40" cy="-94.72" r="6.3" fill="#0e9090" stroke="#c4cccc" stroke-width="1.6"/>
<circle cx="943.70" cy="-94.72" r="6.3" fill="#0e9090" stroke="#c4cccc" stroke-width="1.6"/>
<circle cx="840.40" cy="249.56" r="164.2" fill="none" stroke="#00ffff" stroke-width="4"/>
<circle cx="840.40" cy="249.56" r="54.6" fill="none" stroke="#00ffff" stroke-width="3.4"/>
<circle cx="737.10" cy="249.56" r="20.4" fill="none" stroke="#00ffff" stroke-width="3.8"/>
<circle cx="943.70" cy="249.56" r="20.4" fill="none" stroke="#00ffff" stroke-width="3.8"/>
<path d="M812.50 110.84A141.5 141.5 0 0 1 868.50 110.88L868.50 155.86L891.00 166.06L926.90 166.06L944.40 194.96L888.30 195.26A72.4 72.4 0 0 0 812.50 182.75Z" fill="#00ffff"/>
<path d="M868.30 388.28A141.5 141.5 0 0 1 812.30 388.24L812.30 343.26L789.80 333.06L753.90 333.06L736.40 304.16L792.50 303.86A72.4 72.4 0 0 0 868.30 316.37Z" fill="#00ffff"/>
<circle cx="908.90" cy="180.76" r="6.6" fill="#0e8e8e"/>
<circle cx="771.90" cy="318.36" r="6.6" fill="#0e8e8e"/>
<circle cx="737.10" cy="249.56" r="6.3" fill="#0e9090" stroke="#c4cccc" stroke-width="1.6"/>
<circle cx="840.40" cy="249.56" r="6.3" fill="#0e9090" stroke="#c4cccc" stroke-width="1.6"/>
<circle cx="943.70" cy="249.56" r="6.3" fill="#0e9090" stroke="#c4cccc" stroke-width="1.6"/>
<circle cx="840.40" cy="593.24" r="164.2" fill="none" stroke="#00ffff" stroke-width="4"/>
<circle cx="840.40" cy="593.84" r="54.6" fill="none" stroke="#00ffff" stroke-width="3.4"/>
<circle cx="737.10" cy="593.84" r="20.4" fill="none" stroke="#00ffff" stroke-width="3.8"/>
<circle cx="943.70" cy="593.84" r="20.4" fill="none" stroke="#00ffff" stroke-width="3.8"/>
<path d="M812.50 455.71A141.5 141.5 0 0 1 868.50 455.75L868.50 500.74L891.00 510.94L926.90 510.94L944.40 539.84L888.30 540.14A72.4 72.4 0 0 0 812.50 527.63Z" fill="#00ffff"/>
<path d="M868.30 732.56A141.5 141.5 0 0 1 812.30 732.52L812.30 687.54L789.80 677.34L753.90 677.34L736.40 648.44L792.50 648.13A72.4 72.4 0 0 0 868.30 660.64Z" fill="#00ffff"/>
<circle cx="908.90" cy="525.04" r="6.6" fill="#0e8e8e"/>
<circle cx="771.90" cy="662.63" r="6.6" fill="#0e8e8e"/>
<circle cx="737.10" cy="593.84" r="6.3" fill="#0e9090" stroke="#c4cccc" stroke-width="1.6"/>
<circle cx="840.40" cy="593.84" r="6.3" fill="#0e9090" stroke="#c4cccc" stroke-width="1.6"/>
<circle cx="943.70" cy="593.84" r="6.3" fill="#0e9090" stroke="#c4cccc" stroke-width="1.6"/>
<path d="M496.1 249.5H660" stroke="#fff" stroke-width="1" stroke-dasharray="3 2" shape-rendering="crispEdges"/>
<rect x="326" y="245" width="8" height="8" fill="#fff" shape-rendering="crispEdges"/>
<rect x="656" y="245" width="8" height="8" fill="#fff" shape-rendering="crispEdges"/>
</svg>

<!-- vertical scrollbar -->
<div class="a" style="left:755px;top:108px;width:16px;height:403px;background:linear-gradient(90deg,#f3f1ea,#fdfcf8)"></div>
<!-- horizontal scrollbar -->
<div class="a" style="left:28px;top:511px;width:727px;height:16px;background:linear-gradient(#f3f1ea,#fdfcf8)"></div>
<div class="a" style="left:755px;top:107px;width:17px;height:1px;background:#a8a898"></div>
<div class="a" style="left:756px;top:108px;width:15px;height:16px;border:1px solid #fff;border-radius:2px;background:linear-gradient(135deg,#d6e2fb,#b8cbf3);box-shadow:inset -1px -1px 0 #a8b8e0"><svg class="a" style="left:2px;top:3px" width="11" height="9"><path d="M2 6.5l3.5-3.5 3.5 3.5" stroke="#4d6185" stroke-width="2.2" fill="none"/></svg></div>
<div class="a" style="left:757px;top:463px;width:14px;height:15px;border:1px solid #fff;border-radius:2px;background:linear-gradient(135deg,#d6e2fb,#b8cbf3);box-shadow:inset -1px -1px 0 #a8b8e0"><svg class="a" style="left:2px;top:3px" width="9" height="9"><path d="M1 1.5h7M1 3.5h7M1 5.5h7M1 7.5h7" stroke="#9aaee0"/></svg></div>
<div class="a" style="left:757px;top:495px;width:14px;height:16px;border:1px solid #fff;border-radius:2px;background:linear-gradient(135deg,#d6e2fb,#b8cbf3);box-shadow:inset -1px -1px 0 #a8b8e0"><svg class="a" style="left:1px;top:4px" width="11" height="9"><path d="M2 2.5l3.5 3.5 3.5-3.5" stroke="#4d6185" stroke-width="2.2" fill="none"/></svg></div>
<div class="a" style="left:28px;top:512px;width:16px;height:15px;border:1px solid #fff;border-radius:2px;background:linear-gradient(135deg,#d6e2fb,#b8cbf3);box-shadow:inset -1px -1px 0 #a8b8e0"><svg class="a" style="left:3px;top:2px" width="9" height="11"><path d="M6.5 2l-3.5 3.5 3.5 3.5" stroke="#4d6185" stroke-width="2.2" fill="none"/></svg></div>
<div class="a" style="left:72px;top:512px;width:16px;height:15px;border:1px solid #fff;border-radius:2px;background:linear-gradient(135deg,#d6e2fb,#b8cbf3);box-shadow:inset -1px -1px 0 #a8b8e0"><svg class="a" style="left:3px;top:2px" width="9" height="9"><path d="M1.5 1v7M3.5 1v7M5.5 1v7M7.5 1v7" stroke="#9aaee0"/></svg></div>
<div class="a" style="left:739px;top:512px;width:15px;height:15px;border:1px solid #fff;border-radius:2px;background:linear-gradient(135deg,#d6e2fb,#b8cbf3);box-shadow:inset -1px -1px 0 #a8b8e0"><svg class="a" style="left:3px;top:2px" width="9" height="11"><path d="M2.5 2l3.5 3.5-3.5 3.5" stroke="#4d6185" stroke-width="2.2" fill="none"/></svg></div>
<div class="a" style="left:28px;top:527px;width:727px;height:1px;background:#c8c5b5"></div>

<!-- layer tabs -->
<svg class="a" style="left:0;top:520px" width="370" height="30" viewBox="0 520 370 30">
<rect x="31.5" y="531.5" width="26" height="13" fill="#00ffff" stroke="#555"/>
<path d="M327.6 527.5L332.6 543.5H422L427 527.5" fill="#fff" stroke="#000" stroke-width="1"/>
<text x="334.6" y="540.5" font-size="11.5" letter-spacing="-0.45" font-family="Liberation Sans">Keep-Out Layer</text>
<path d="M261 527.5L266 543.5H327L332 527.5" fill="#fff" stroke="#000" stroke-width="1"/>
<text x="268" y="540.5" font-size="11.5" letter-spacing="-0.45" font-family="Liberation Sans">Top Overlay</text>
<path d="M187.5 527.5L192.5 543.5H259.4L264.4 527.5" fill="#fff" stroke="#000" stroke-width="1"/>
<text x="194.5" y="540.5" font-size="11.5" letter-spacing="-0.45" font-family="Liberation Sans">Mechanical 1</text>
<path d="M117 527.5L122 543.5H187L192 527.5" fill="#fff" stroke="#000" stroke-width="1"/>
<text x="124" y="540.5" font-size="11.5" letter-spacing="-0.45" font-family="Liberation Sans">Bottom Layer</text>
<path d="M60 527.5H366" stroke="#000"/><path d="M28 527.5H60" stroke="#9a9a90"/>
<path d="M60.400000000000006 527.5L65.4 543.5H116L121 527.5" fill="#ece9d8" stroke="#000" stroke-width="1"/>
<text x="67.4" y="540.5" font-size="11.5" letter-spacing="-0.45" font-family="Liberation Sans">Top Layer</text>
</svg>
<div class="a" style="left:366px;top:527px;width:20px;height:20px;background:#ece9d8"></div>
<div class="btn" style="left:639px;top:529px;width:34px;height:19px"></div>
<svg class="a" style="left:639px;top:529px" width="34" height="19"><circle cx="8" cy="6" r="2.6" fill="#f0e060" stroke="#807020" stroke-width="0.8"/><circle cx="8" cy="13" r="2.6" fill="#f0e060" stroke="#807020" stroke-width="0.8"/><path d="M13 5l5 4.5-5 4.5z" fill="#707070"/><path d="M19.5 5.5h10l-4 4.5v4l-2 1v-5z" fill="none" stroke="#333" stroke-width="1.1"/></svg>
<div class="btn" style="left:672px;top:529px;width:65px;height:19px"></div>
<div class="t" style="left:677px;top:532px;color:#6a6a6a;font-size:11px">Mask Level</div>
<div class="btn" style="left:736px;top:529px;width:36px;height:19px"></div>
<div class="t" style="left:742px;top:532px;color:#6a6a6a;font-size:11px">Clear</div>

<!-- panels bottom -->
<div class="btn" style="left:2px;top:551px;width:90px;height:19px"></div>
<div class="t" style="left:5px;top:554px;color:#6a6a62;font-size:11px;letter-spacing:-0.2px">Storage Manager</div>
<div class="btn" style="left:95px;top:551px;width:41px;height:19px"></div>
<div class="t" style="left:99px;top:554px;color:#6a6a62;font-size:11px">Output</div>
<div class="a" style="left:0;top:575px;width:800px;height:1px;background:#aca899"></div>
<div class="a" style="left:0;top:576px;width:800px;height:1px;background:#fff"></div>
<div class="t" style="left:5px;top:582px;font-size:11px;letter-spacing:-0.25px">X:91.6mm Y:100.6mm</div>
<div class="t" style="left:120px;top:582px;font-size:10.5px;letter-spacing:-0.2px">Grid:0.1mm</div>
<div class="a" style="left:205px;top:579px;width:1px;height:19px;background:#aca899"></div>
<div class="t" style="left:211px;top:582px;font-size:10.6px;letter-spacing:-0.1px">Arc (101mm,108mm)</div>
<div class="t" style="left:313px;top:582px;font-size:11px">Top Layer</div>
<div class="a" style="left:520px;top:580px;width:100px;height:18px;border-right:1px solid #cdc9b8;box-shadow:1px 0 0 #f8f6ee"></div>
<div class="t" style="left:535px;top:582px;font-size:11px;color:#34342e;letter-spacing:-0.2px">Design Compiler</div>
<div class="a" style="left:620px;top:580px;width:41px;height:18px;border-right:1px solid #cdc9b8;box-shadow:1px 0 0 #f8f6ee"></div>
<div class="t" style="left:629px;top:582px;font-size:11px;color:#34342e;letter-spacing:0"><u>H</u>elp</div>
<div class="a" style="left:661px;top:580px;width:69px;height:18px;border-right:1px solid #cdc9b8;box-shadow:1px 0 0 #f8f6ee"></div>
<div class="t" style="left:669px;top:582px;font-size:11px;color:#34342e;letter-spacing:0"><u>I</u>nstruments</div>
<div class="a" style="left:730px;top:580px;width:43px;height:18px;border-right:1px solid #cdc9b8;box-shadow:1px 0 0 #f8f6ee"></div>
<div class="t" style="left:741px;top:582px;font-size:11px;color:#34342e;letter-spacing:0"><u>P</u>CB</div>
<div class="a" style="left:773px;top:580px;width:24px;height:18px;border-right:1px solid #cdc9b8;box-shadow:1px 0 0 #f8f6ee"></div>
<div class="t" style="left:780px;top:582px;font-size:11px;color:#34342e;letter-spacing:0">&gt;&gt;</div>
<div class="a" style="left:0;top:598px;width:800px;height:2px;background:#3a6ad8"></div>

<!-- context menu -->
<div class="a menu"><div class="gut"></div>
<div class="a" style="left:1px;top:1px;width:179px;height:22px;background:#c1d2ee;border:1px solid #4a64b0"></div>
<div class="t" style="left:31px;top:6px;letter-spacing:-0.1px">Fi<u>n</u>d Similar Objects...</div>
<div class="t" style="left:31px;top:28px;letter-spacing:-0.1px">Build Query...</div>
<div class="t" style="left:31px;top:50px;letter-spacing:-0.1px"><u>F</u>ilter</div>
<div class="arr" style="top:52px"></div>
<div class="msep" style="top:69px"></div>
<div class="t" style="left:31px;top:77px;letter-spacing:-0.1px">Arc <u>L</u>ocked</div>
<div class="t" style="left:31px;top:99px;letter-spacing:-0.1px"><u>U</u>nions</div>
<div class="arr" style="top:101px"></div>
<div class="t" style="left:31px;top:121px;letter-spacing:-0.1px"><u>S</u>nippets</div>
<div class="arr" style="top:123px"></div>
<div class="t" style="left:31px;top:143px;letter-spacing:-0.1px"><u>C</u>omponent Actions</div>
<div class="arr" style="top:145px"></div>
<div class="t" style="left:31px;top:165px;letter-spacing:-0.1px"><u>A</u>lign</div>
<div class="arr" style="top:167px"></div>
<div class="msep" style="top:184px"></div>
<div class="t" style="left:31px;top:192px;letter-spacing:-0.1px">Room Actions</div>
<div class="arr" style="top:194px"></div>
<div class="t" style="left:31px;top:214px;letter-spacing:-0.1px">Interactive Rou<u>t</u>ing</div>
<div class="t" style="left:31px;top:236px;letter-spacing:-0.1px">Differential Pair Routing</div>
<div class="t" style="left:31px;top:258px;letter-spacing:-0.1px">Smart <u>I</u>nteractive Routing</div>
<div class="msep" style="top:277px"></div>
<div class="t" style="left:31px;top:285px;letter-spacing:-0.1px">Applicable <u>U</u>nary Rules...</div>
<div class="t" style="left:31px;top:307px;letter-spacing:-0.1px">Applicable <u>B</u>inary Rules...</div>
<div class="msep" style="top:326px"></div>
<div class="t" style="left:31px;top:334px;letter-spacing:-0.1px">Snap <u>G</u>rid</div>
<div class="arr" style="top:336px"></div>
<div class="t" style="left:31px;top:356px;letter-spacing:-0.1px"><u>V</u>iew</div>
<div class="arr" style="top:358px"></div>
<div class="t" style="left:31px;top:378px;letter-spacing:-0.1px"><u>D</u>esign</div>
<div class="arr" style="top:380px"></div>
<div class="msep" style="top:397px"></div>
<div class="t" style="left:31px;top:405px;letter-spacing:-0.1px"><u>O</u>ptions</div>
<div class="arr" style="top:407px"></div>
<div class="t" style="left:31px;top:427px;letter-spacing:-0.1px"><u>P</u>roperties...</div>
</div>
<svg class="a" style="left:0;top:0" width="800" height="600" viewBox="0 0 800 600"><path d="M373.5 161.5h9l-3.5 4v4.5l-2 1.2v-5.7z" fill="#fff" stroke="#333" stroke-width="1"/><path d="M379 166v5" stroke="#777" stroke-width="1"/><path d="M370.5 191.5l8-8" stroke="#777" stroke-width="2"/><path d="M375 181l4-2 4 4-2 3z" fill="#f0e8f0" stroke="#8a8a9a" stroke-width="0.8"/><path d="M379.5 188.5h9l-3.5 4v4l-2 1v-5z" fill="#fafafa" stroke="#9a9aa4" stroke-width="1"/><path d="M372.5 382V371.5h7" stroke="#ecc860" stroke-width="3" fill="none" opacity="0.9"/><path d="M372.5 381V372.5h6" stroke="#f8e4a0" stroke-width="0.9" fill="none"/><path d="M378.5 367.5l4 4-4 4z" fill="#e8c050"/><path d="M374.5 381.5l10-10" stroke="#98a4e8" stroke-width="1.1"/><path d="M383.5 366.5q4 3.5 0 8z" fill="#ecc858"/><path d="M372.5 404V393.5h7" stroke="#ecc860" stroke-width="3" fill="none" opacity="0.9"/><path d="M372.5 403V394.5h6" stroke="#f8e4a0" stroke-width="0.9" fill="none"/><path d="M378.5 389.5l4 4-4 4z" fill="#e8c050"/><path d="M374.5 403.5l10-10" stroke="#98a4e8" stroke-width="1.1"/><path d="M383.5 388.5q4 3.5 0 8z" fill="#ecc858"/><path d="M372.5 426V415.5h7" stroke="#ecc860" stroke-width="3" fill="none" opacity="0.9"/><path d="M372.5 425V416.5h6" stroke="#f8e4a0" stroke-width="0.9" fill="none"/><path d="M378.5 411.5l4 4-4 4z" fill="#e8c050"/><path d="M374.5 425.5l10-10" stroke="#98a4e8" stroke-width="1.1"/><path d="M383.5 410.5q4 3.5 0 8z" fill="#ecc858"/><path d="M375.5 418.5l3 5M378.5 418.5l-3 5" stroke="#ec7878" stroke-width="1.1"/></svg>
</body></html>
